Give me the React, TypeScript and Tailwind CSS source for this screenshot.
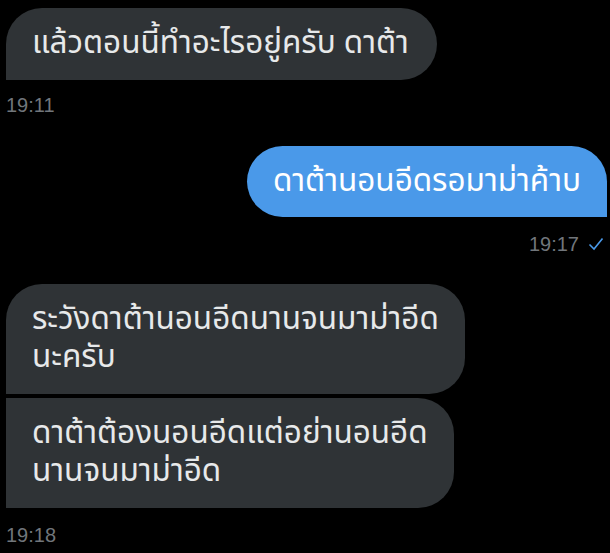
import React from "react";

const thai = { fontFamily: '"Noto Sans Thai", "Noto Sans", "DejaVu Sans", sans-serif' };

const Time: React.FC<{ t: string; mine?: boolean }> = ({ t, mine }) => (
  <div
    className={`flex items-center gap-[9px] text-[20px] leading-[24px] text-[#71767b] ${mine ? "justify-end pr-[6px]" : "pl-[6px]"}`}
    style={{ fontFamily: '"Liberation Sans", Arial, sans-serif' }}
  >
    {t}
    {mine && (
      <svg width="16" height="14" viewBox="0 0 16 14" fill="none" stroke="#4a99e9" strokeWidth="1.6">
        <path d="M1.5 7.5 L6 12 L14.5 1.5" />
      </svg>
    )}
  </div>
);

export default function App() {
  return (
    <div className="w-[610px] h-[553px] bg-black overflow-hidden pt-[8px] text-[#e7e9ea]" style={thai}>
      <div className="pl-[6px]">
        <div className="inline-block whitespace-nowrap bg-[#2f3336] rounded-[36px] rounded-bl-none pl-[26px] pr-[28px] py-[17px] text-[31.5px] leading-[38px]">
          แล้วตอนนี้ทำอะไรอยู่ครับ ดาต้า
        </div>
      </div>
      <div className="mt-[13px]">
        <Time t="19:11" />
      </div>

      <div className="flex justify-end pr-[3px] mt-[29px]">
        <div className="whitespace-nowrap bg-[#4a99e9] text-white rounded-[36px] rounded-br-none px-[26px] py-[17px] text-[31.5px] leading-[37px]">
          ดาต้านอนอีดรอมาม่าค้าบ
        </div>
      </div>
      <div className="mt-[15px]">
        <Time t="19:17" mine />
      </div>

      <div className="pl-[6px] mt-[28px] flex flex-col items-start gap-[4px]">
        <div className="whitespace-nowrap bg-[#2f3336] rounded-[36px] rounded-bl-none px-[26px] py-[17px] text-[31.5px] leading-[38px]">
          ระวังดาต้านอนอีดนานจนมาม่าอีด
          <br />
          นะครับ
        </div>
        <div className="whitespace-nowrap bg-[#2f3336] rounded-[36px] rounded-tl-none rounded-bl-none px-[26px] py-[17px] text-[31.5px] leading-[38px]">
          ดาต้าต้องนอนอีดแต่อย่านอนอีด
          <br />
          นานจนมาม่าอีด
        </div>
      </div>
      <div className="mt-[15px]">
        <Time t="19:18" />
      </div>
    </div>
  );
}
